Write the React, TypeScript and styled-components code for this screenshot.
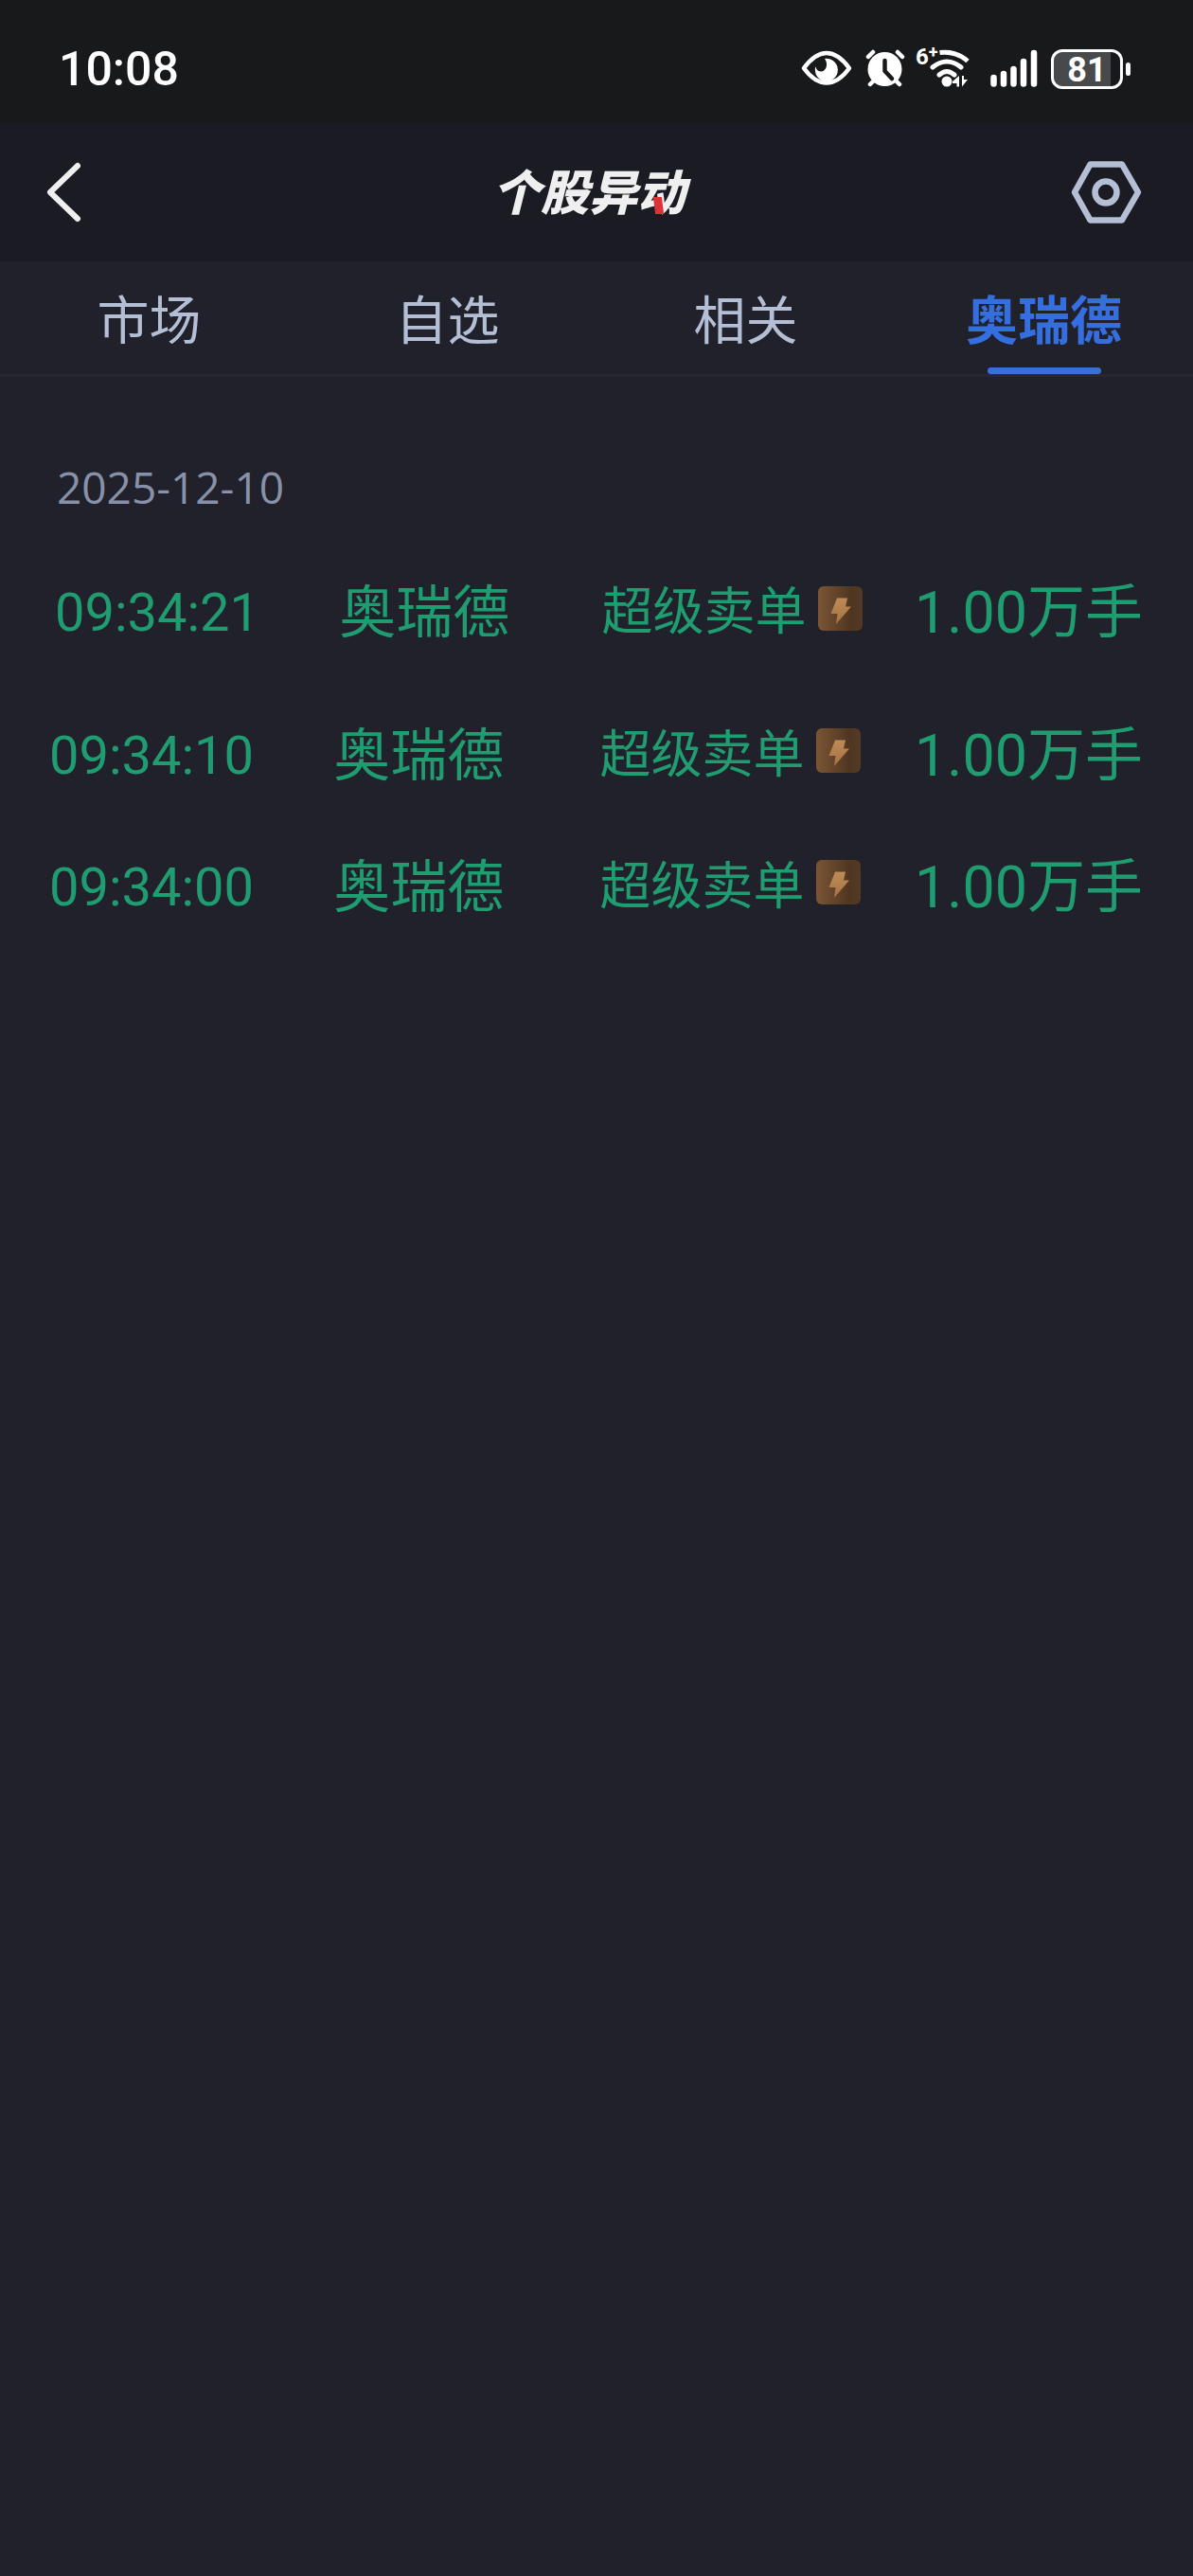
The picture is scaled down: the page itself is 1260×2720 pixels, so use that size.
import React from "react";
import styled, { createGlobalStyle } from "styled-components";

const GlobalStyle = createGlobalStyle`
  * { box-sizing: border-box; }
  html { background: #20212a; }
  body { margin: 0; background: #20212a; font-family: "Noto Sans CJK SC", "Noto Sans", sans-serif; }
  svg { display: block; }
`;

const Page = styled.div`
  min-height: 100vh;
  background: #20212a;
`;

const StatusBar = styled.div`
  display: flex;
  align-items: center;
  justify-content: space-between;
  height: 130px;
  padding: 16px 66px 0 62px;
  background: #18191b;
  color: #fff;
`;

const Clock = styled.time`
  font-family: Roboto, sans-serif;
  font-size: 50px;
  line-height: 60px;
  font-weight: 500;
`;

const StatusIcons = styled.div`
  display: flex;
  align-items: center;
  gap: 14px;
`;

const WifiBox = styled.div`
  position: relative;
`;

const WifiLabel = styled.span`
  position: absolute;
  left: -3px;
  top: -4px;
  display: flex;
  align-items: flex-start;
  font-family: Roboto, sans-serif;
  font-size: 24px;
  line-height: 28px;
  font-weight: 700;
  sup {
    font-size: 18px;
    line-height: 18px;
    vertical-align: top;
  }
`;

const Battery = styled.div`
  display: flex;
  align-items: center;
  gap: 3px;
  &::after {
    content: "";
    width: 5px;
    height: 14px;
    border-radius: 3px;
    background: #fff;
  }
`;

const BatteryLevel = styled.span`
  width: 76px;
  height: 42px;
  border: 3px solid #fff;
  border-radius: 12px;
  background: linear-gradient(90deg, #48494b 86%, #18191b 86%) padding-box;
  text-align: center;
  font-family: Roboto, sans-serif;
  font-size: 36px;
  line-height: 38px;
  font-weight: 700;
`;

const Header = styled.header`
  display: grid;
  grid-template-columns: 1fr auto 1fr;
  align-items: center;
  height: 146px;
  padding: 0 54px 0 46px;
  background: #1a1b23;
`;

const IconButton = styled.button<{ $end?: boolean }>`
  justify-self: ${(p) => (p.$end ? "end" : "start")};
  padding: 0;
  border: 0;
  background: none;
  cursor: pointer;
`;

const Title = styled.h1`
  position: relative;
  margin: 0;
  padding: 0 8px 6px 0;
  color: #efefef;
  font-size: 51px;
  line-height: 60px;
  font-weight: 900;
  font-style: italic;
`;

const TitleMark = styled.span`
  position: absolute;
  left: 171px;
  bottom: 10px;
  width: 9px;
  height: 18px;
  background: #dc3339;
  transform: skewX(7deg);
`;

const Tabs = styled.nav`
  display: grid;
  grid-template-columns: repeat(4, 1fr);
  height: 122px;
  border-bottom: 3px solid #27282d;
`;

const Tab = styled.button<{ $active?: boolean }>`
  display: flex;
  flex-direction: column;
  align-items: center;
  justify-content: space-between;
  padding: 22px 0 0;
  border: 0;
  background: none;
  font-family: inherit;
  font-size: 55px;
  line-height: 72px;
  font-weight: ${(p) => (p.$active ? 700 : 400)};
  color: ${(p) => (p.$active ? "#346edf" : "#b4bfd6")};
  cursor: pointer;
  &::after {
    content: "";
    width: 120px;
    height: 7px;
    border-radius: 4px;
    background: ${(p) => (p.$active ? "#3970d8" : "transparent")};
  }
`;

const Content = styled.main`
  padding: 82px 53px 0 52px;
`;

const DateLabel = styled.h2`
  margin: 0;
  padding-left: 8px;
  color: #8891a9;
  font-family: "Open Sans", sans-serif;
  font-size: 46px;
  line-height: 68px;
  font-weight: 400;
`;

const Records = styled.table`
  width: 100%;
  margin-top: 13px;
  table-layout: fixed;
  border-collapse: collapse;
  color: #1f9c70;
`;

const Cell = styled.td<{ $size: number; $right?: boolean }>`
  padding: 0;
  font-size: ${(p) => p.$size}px;
  line-height: 72px;
  white-space: nowrap;
  text-align: ${(p) => (p.$right ? "right" : "left")};
`;

const Row = styled.tr<{ $first?: boolean }>`
  height: ${(p) => (p.$first ? "162px" : "139px")};
  ${Cell}:nth-child(-n + 2) { padding-left: ${(p) => (p.$first ? "6px" : "0")}; }
  ${Cell}:nth-child(3) { padding-left: ${(p) => (p.$first ? "6px" : "4px")}; }
`;

const Num = styled.span`
  font-family: Roboto, sans-serif;
  line-height: 1;
`;

const Signal = styled.div`
  display: flex;
  align-items: center;
  gap: 13px;
`;

const Bolt = () => (
  <svg width="47" height="47" viewBox="0 0 47 47" aria-hidden="true">
    <defs>
      <linearGradient id="tile" x1="0" y1="0" x2="1" y2="0">
        <stop offset="0" stopColor="#7b5535" />
        <stop offset="0.75" stopColor="#4f3621" />
        <stop offset="1" stopColor="#543a24" />
      </linearGradient>
      <linearGradient id="bolt" x1="0" y1="0" x2="0" y2="1">
        <stop offset="0" stopColor="#be8b57" />
        <stop offset="1" stopColor="#a57244" />
      </linearGradient>
    </defs>
    <rect width="47" height="47" rx="6" fill="url(#tile)" />
    <path d="M20 12.5H31L29 21.500H35L19 40L20.500 29H13.500Z" fill="url(#bolt)" />
  </svg>
);

const EyeIcon = () => (
  <svg width="54" height="46" viewBox="845 50 54 46" aria-hidden="true">
    <path d="M848 72C856 61 864 56 872 56S888 61 896 72C888 83 880 87.500 872 87.500S856 83 848 72Z" fill="none" stroke="#fff" strokeWidth="4.500" strokeLinejoin="round" />
    <path d="M870 62A12 12 0 1 1 860.500 70Q861 75 866 75.500C872 75.500 874 67 870 62Z" fill="#fff" />
  </svg>
);

const AlarmIcon = () => (
  <svg width="42" height="46" viewBox="914 50 42 46" aria-hidden="true">
    <path d="M917 60L922 55M953 60L948 55M919 89L924 84M950 89L945 84" fill="none" stroke="#fff" strokeWidth="4.500" strokeLinecap="round" />
    <circle cx="934.500" cy="73" r="18" fill="#fff" />
    <path d="M934.500 64V75L942 83" fill="none" stroke="#18191b" strokeWidth="4.500" strokeLinecap="round" strokeLinejoin="round" />
  </svg>
);

const WifiIcon = () => (
  <svg width="56" height="46" viewBox="968 50 56 46" aria-hidden="true">
    <path d="M990.500 55.500Q1008 53.500 1020 64.500" fill="none" stroke="#fff" strokeWidth="5" />
    <path d="M983 71Q998 59 1013 71M990 79Q998 72 1006 79" fill="none" stroke="#fff" strokeWidth="5" strokeLinecap="round" />
    <circle cx="998" cy="86" r="5.500" fill="#fff" />
    <path d="M1011 80V91.500H1008.500V88H1004V86ZM1014 80H1016V84H1020L1014 91.500Z" fill="#fff" />
  </svg>
);

const CellularIcon = () => (
  <svg width="50" height="46" viewBox="1044 50 50 46" aria-hidden="true">
    <path d="M1047.500 82V88.500M1058 78V88.500M1068.500 73V88.500M1079 65V88.500M1090 56V88.500" fill="none" stroke="#fff" strokeWidth="6.500" strokeLinecap="round" />
  </svg>
);

const CellularBox = styled.div`
  padding-left: 6px;
`;

const records = [
  { time: "09:34:21", name: "奥瑞德", signal: "超级卖单", count: "1.00", unit: "万手" },
  { time: "09:34:10", name: "奥瑞德", signal: "超级卖单", count: "1.00", unit: "万手" },
  { time: "09:34:00", name: "奥瑞德", signal: "超级卖单", count: "1.00", unit: "万手" },
];

const Col = styled.col<{ $width: number }>`
  width: ${(p) => p.$width}%;
`;

export default function App() {
  return (
    <Page>
      <GlobalStyle />
      <StatusBar>
        <Clock>10:08</Clock>
        <StatusIcons>
          <EyeIcon />
          <AlarmIcon />
          <WifiBox>
            <WifiIcon />
            <WifiLabel>6<sup>+</sup></WifiLabel>
          </WifiBox>
          <CellularBox><CellularIcon /></CellularBox>
          <Battery><BatteryLevel>81</BatteryLevel></Battery>
        </StatusIcons>
      </StatusBar>
      <Header>
        <IconButton aria-label="返回">
          <svg width="44" height="66" viewBox="0 0 44 66" fill="none" stroke="#efefef" strokeWidth="6" strokeLinecap="round" strokeLinejoin="round">
            <path d="M36 5L7 33L36 61" />
          </svg>
        </IconButton>
        <Title>个股异动<TitleMark /></Title>
        <IconButton $end aria-label="设置">
          <svg width="76" height="68" viewBox="0 0 76 68" fill="none" stroke="#b4bfd6" strokeWidth="6.500" strokeLinejoin="round">
            <path d="M21.500 4.500H55L72 34L55 63.500H21.500L5 34Z" />
            <circle cx="38" cy="34" r="11.500" />
          </svg>
        </IconButton>
      </Header>
      <Tabs>
        <Tab>市场</Tab>
        <Tab>自选</Tab>
        <Tab>相关</Tab>
        <Tab $active aria-current="page">奥瑞德</Tab>
      </Tabs>
      <Content>
        <DateLabel>2025-12-10</DateLabel>
        <Records>
          <colgroup>
            <Col $width={26} />
            <Col $width={24} />
            <Col $width={25} />
            <Col $width={25} />
          </colgroup>
          <tbody>
            {records.map((r, i) => (
              <Row key={r.time} $first={i === 0}>
                <Cell $size={56}><Num>{r.time}</Num></Cell>
                <Cell $size={60}>{r.name}</Cell>
                <Cell $size={54}><Signal>{r.signal}<Bolt /></Signal></Cell>
                <Cell $size={61} $right><Num>{r.count}</Num>{r.unit}</Cell>
              </Row>
            ))}
          </tbody>
        </Records>
      </Content>
    </Page>
  );
}
